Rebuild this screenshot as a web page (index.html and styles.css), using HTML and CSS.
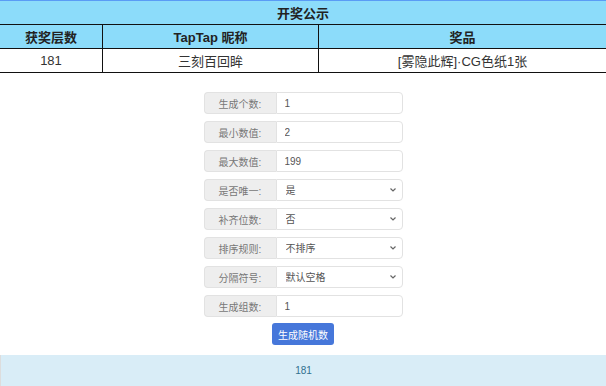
FILE: index.html
```html
<!DOCTYPE html>
<html lang="zh-CN">
<head>
    <meta charset="UTF-8">
    <meta name="viewport" content="width=device-width, initial-scale=1.0">
    <title>开奖公示</title>
    <link rel="stylesheet" href="styles.css">
</head>
<body>
    <table class="prize-table">
        <tr><th colspan="3" class="title">开奖公示</th></tr>
        <tr>
            <th class="col-floor">获奖层数</th>
            <th class="col-name">TapTap 昵称</th>
            <th>奖品</th>
        </tr>
        <tr>
            <td>181</td>
            <td>三刻百回眸</td>
            <td>[雾隐此辉]·CG色纸1张</td>
        </tr>
    </table>

    <div class="form">
        <div class="row"><span class="label">生成个数:</span><input type="text" value="1"></div>
        <div class="row"><span class="label">最小数值:</span><input type="text" value="2"></div>
        <div class="row"><span class="label">最大数值:</span><input type="text" value="199"></div>
        <div class="row"><span class="label">是否唯一:</span><select><option>是</option><option>否</option></select></div>
        <div class="row"><span class="label">补齐位数:</span><select><option>否</option><option>是</option></select></div>
        <div class="row"><span class="label">排序规则:</span><select><option>不排序</option><option>从小到大</option></select></div>
        <div class="row"><span class="label">分隔符号:</span><select><option>默认空格</option><option>逗号</option></select></div>
        <div class="row"><span class="label">生成组数:</span><input type="text" value="1"></div>
        <button class="btn">生成随机数</button>
    </div>

    <div class="result">181</div>
</body>
</html>
```

FILE: styles.css
```css
body { margin: 0; font-family: "Liberation Sans", "Noto Sans CJK SC", sans-serif; color: #222; background: #fff; border-top: 1px solid #5a9cf5; }
.prize-table { width: 100%; border-collapse: collapse; font-size: 13px; }
.prize-table th, .prize-table td { border: 1px solid #111; height: 23px; padding: 0; text-align: center; }
.prize-table tr:first-child th { border-top: none; }
.prize-table th:first-child, .prize-table td:first-child { border-left: none; }
.prize-table th:last-child, .prize-table td:last-child { border-right: none; }
.prize-table th { background: #8cdcfa; font-weight: bold; }
.prize-table td { color: #333; }
.col-floor { width: 102px; }
.col-name { width: 215px; }

.form { display: flex; flex-direction: column; align-items: center; gap: 7px; margin: 19px 0 10px; }
.row { display: flex; width: 199px; height: 22px; font-size: 10px; }
.label { width: 72px; box-sizing: border-box; background: #eee; border: 1px solid #e2e2e2; border-right: none; border-radius: 4px 0 0 4px; color: #777; display: flex; align-items: center; justify-content: center; }
.row input, .row select { flex: 1; min-width: 0; box-sizing: border-box; height: 22px; margin: 0; border: 1px solid #e2e2e2; border-radius: 0 4px 4px 0; background-color: #fff; color: #555; font-size: 10px; font-family: inherit; padding: 0 8px; outline: none; }
.row select { appearance: none; -webkit-appearance: none; padding-left: 9px; background-image: url("data:image/svg+xml,%3Csvg xmlns='http://www.w3.org/2000/svg' width='6' height='4' viewBox='0 0 6 4'%3E%3Cpath d='M0.5 0.5 L3 3 L5.5 0.5' fill='none' stroke='%23666' stroke-width='1.2'/%3E%3C/svg%3E"); background-repeat: no-repeat; background-position: right 6px center; background-size: 6px 4px; }
.btn { width: 62px; height: 22px; margin-top: -1px; border: none; border-radius: 3px; background: #4677da; color: #fff; font-size: 10px; font-family: inherit; padding: 0; cursor: pointer; }
.btn:hover { background: #3a66c0; }

.result { background: #d9edf7; color: #31708f; text-align: center; font-size: 10px; height: 31px; line-height: 31px; border-left: 1px solid #ddd; }
```
